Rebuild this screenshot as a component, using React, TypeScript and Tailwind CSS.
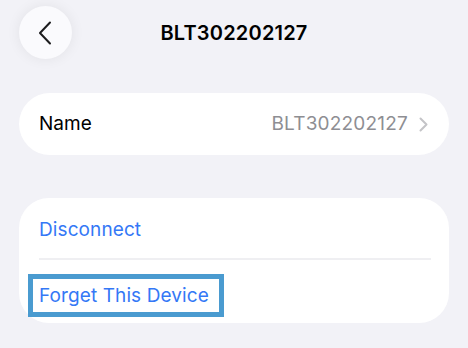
import React from 'react';

const font = { fontFamily: 'Inter, "Liberation Sans", sans-serif' };

export default function App() {
  return (
    <div className="w-[468px] h-[348px] bg-[#f2f2f7] overflow-hidden" style={font}>
      {/* header */}
      <div className="grid grid-cols-[53px_1fr_53px] items-center px-[19px] pt-[6px]">
        <button className="w-[53px] h-[53px] rounded-full bg-[#fafafd] shadow-[0_0_14px_rgba(0,0,0,0.07)] flex items-center justify-center">
          <svg width="14" height="24" viewBox="0 0 14 24" fill="none" className="mr-[2px]">
            <path d="M12 1.5 L2 12 L12 22.5" stroke="#1c1c1e" strokeWidth="2" strokeLinecap="round" strokeLinejoin="round" />
          </svg>
        </button>
        <div className="text-center text-[20px] font-semibold text-black tracking-[0.2px]">BLT302202127</div>
        <div />
      </div>

      {/* name card */}
      <div className="mx-[19px] mt-[34px] h-[62px] rounded-[31px] bg-white flex items-center pl-[20px] pr-[21px] pt-[1px]">
        <span className="text-[19px] text-black">Name</span>
        <span className="ml-auto text-[19px] text-[#8e8e93] tracking-[0.2px]">BLT302202127</span>
        <svg width="9" height="15" viewBox="0 0 9 15" fill="none" className="ml-[11px]">
          <path d="M1.5 1.5 L7.5 7.5 L1.5 13.5" stroke="#c4c4c7" strokeWidth="2" strokeLinecap="round" strokeLinejoin="round" />
        </svg>
      </div>

      {/* actions card */}
      <div className="mx-[19px] mt-[43px] rounded-[30px] bg-white pl-[20px] pr-[18px]">
        <div className="h-[62px] flex items-center pt-[5px] border-b-2 border-[#efeff2]">
          <span className="text-[19px] text-[#3478f6] tracking-[0.1px]">Disconnect</span>
        </div>
        <div className="h-[63px] flex items-center pt-[7px]">
          <span className="ml-[-11px] inline-block border-[5px] border-[#4a9bd0] pl-[6px] pr-[10px] h-[43px] leading-[33px] text-[19px] text-[#3478f6] tracking-[0.1px]">
            Forget This Device
          </span>
        </div>
      </div>
    </div>
  );
}
